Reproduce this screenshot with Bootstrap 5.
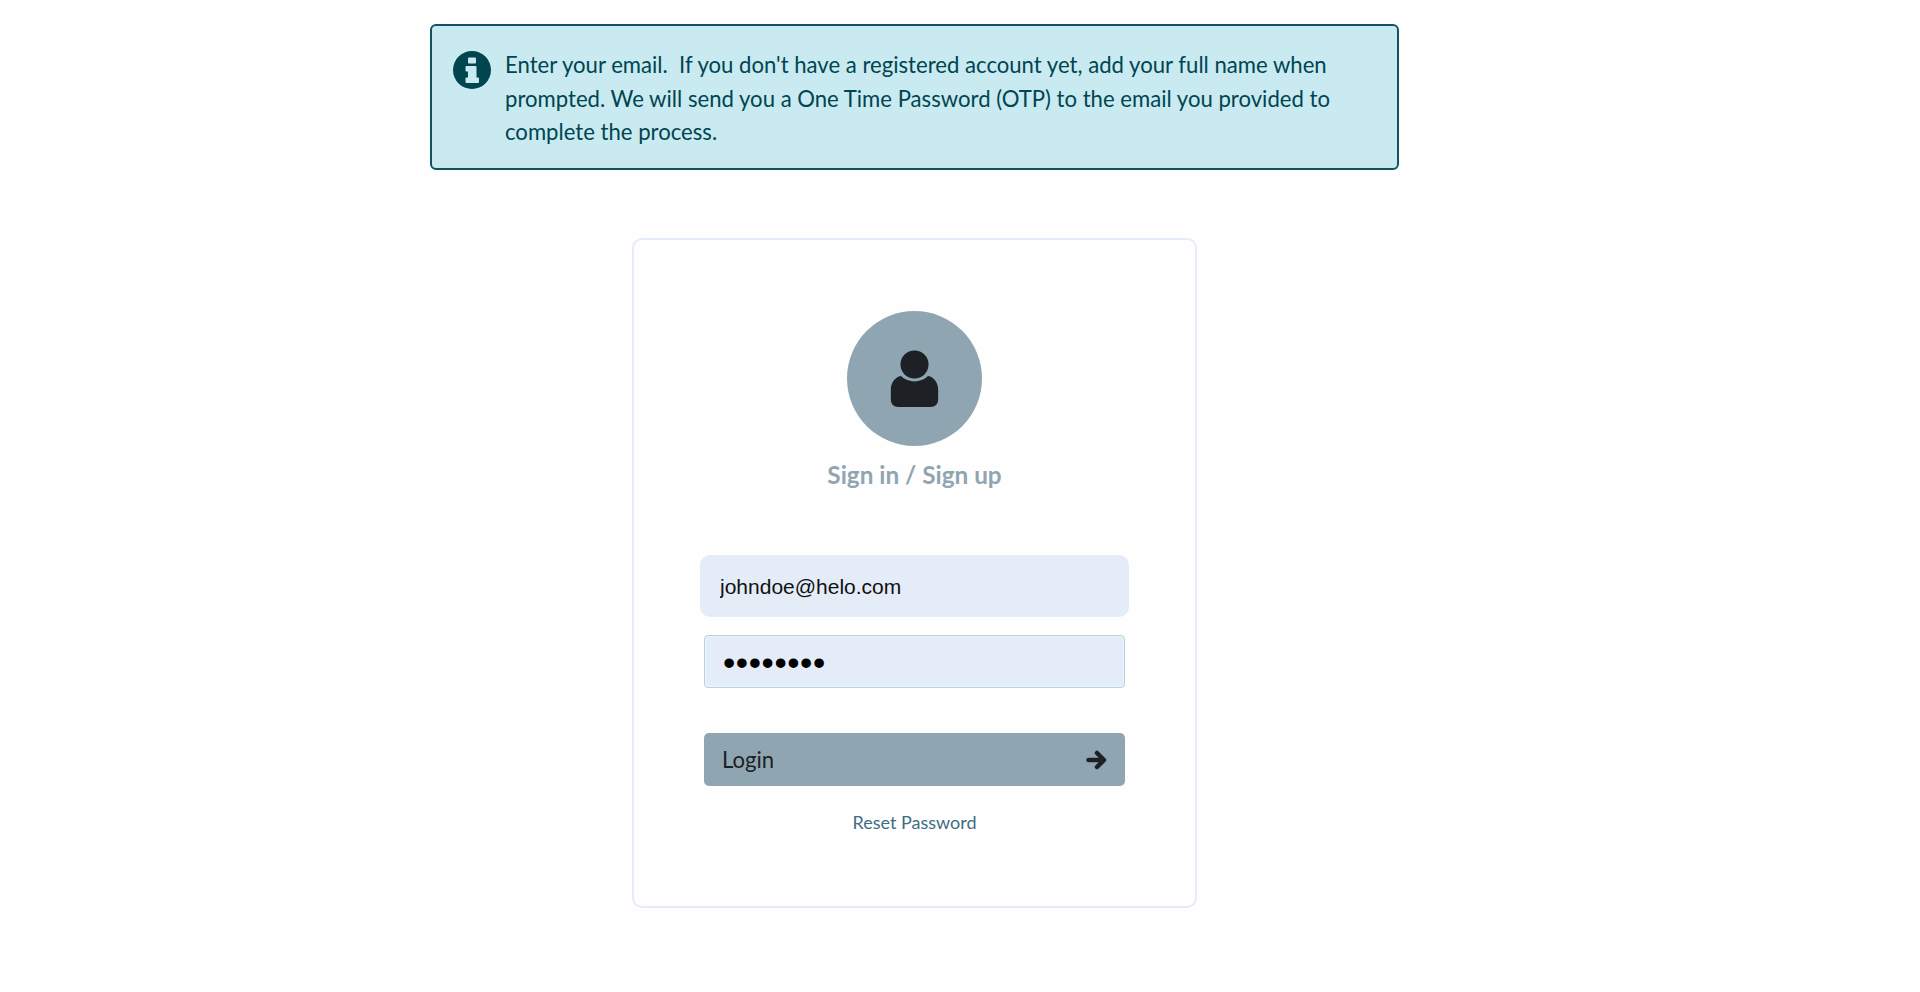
<!DOCTYPE html>
<html lang="en">
<head>
    <meta charset="UTF-8">
    <meta name="viewport" content="width=device-width, initial-scale=1.0">
    <title>Sign in / Sign up</title>
    <link href="https://cdn.jsdelivr.net/npm/bootstrap@5.3.0/dist/css/bootstrap.min.css" rel="stylesheet">
    <style>
        body {
            background-color: #fefefe;
            font-family: Lato, "Liberation Sans", sans-serif;
        }
        .page-wrap {
            width: 969px;
            margin-left: 430px;
            padding-top: 24px;
        }
        .info-box {
            height: 146px;
            padding: 22px 20px 0 21px;
            background-color: #c9eaf0;
            border: 2px solid #12535f;
            border-radius: 6px;
            color: #004550;
            font-size: 22.130px;
            line-height: 33.600px;
        }
        .info-icon {
            flex-shrink: 0;
            margin-top: 3px;
        }
        .info-box p {
            margin: 0 0 0 14px;
        }
        .login-box {
            width: 565px;
            height: 670px;
            margin: 68px auto 0;
            padding: 71px 66px 0;
            background-color: #fefefe;
            border: 2px solid #e4ecf8;
            border-radius: 10px;
        }
        .avatar {
            width: 135px;
            height: 135px;
            background-color: #8fa6b2;
        }
        .login-title {
            margin: 11px 0 0;
            color: #8fa6b2;
            font-size: 24.300px;
            font-weight: 700;
            line-height: 36px;
        }
        .email-input, .email-input:focus {
            height: 62px;
            margin-top: 62px;
            padding: 2px 20px 0;
            background-color: #e4ecf8;
            border: 0;
            border-radius: 10px;
            box-shadow: none;
            color: #111;
            font-family: "Liberation Sans", Arial, sans-serif;
            font-size: 21px;
        }
        .pass-input, .pass-input:focus {
            width: 421px;
            height: 53px;
            margin: 18px auto 0;
            padding: 2px 18px 0;
            background-color: #e4ecf8;
            border: 1px solid #b4d3dc;
            border-radius: 4px;
            box-shadow: inset 0 0 0 1px #eef5fa;
            color: #000;
            font-family: "Liberation Sans", Arial, sans-serif;
            font-size: 35px;
            letter-spacing: 0.6px;
        }
        .login-btn {
            width: 421px;
            height: 53px;
            margin: 45px auto 0;
            padding: 1px 18px 0;
            background-color: #8fa6b2;
            border: 0;
            border-radius: 5px;
            color: #1d2125;
            font-size: 22.130px;
        }
        .login-btn:hover {
            background-color: #8fa6b2;
            color: #1d2125;
        }
        .reset-link {
            margin-top: 23px;
            color: #3f6d82;
            font-size: 18px;
            line-height: 27px;
            text-decoration: none;
        }
    </style>
</head>
<body>
    <div class="page-wrap">
        <!-- Info message -->
        <div class="info-box d-flex">
            <svg class="info-icon" width="38" height="38" viewBox="0 0 38 38" aria-hidden="true">
                <path fill="#004550" fill-rule="evenodd" d="M19 0a19 19 0 1 0 0 38a19 19 0 1 0 0-38zM16 6.500h6a1 1 0 0 1 1 1v4a1 1 0 0 1-1 1h-6a1 1 0 0 1-1-1v-4a1 1 0 0 1 1-1zM13.500 15h9a1 1 0 0 1 1 1v10.500h1.500a1 1 0 0 1 1 1v3.500a1 1 0 0 1-1 1h-11.500a1 1 0 0 1-1-1v-3.500a1 1 0 0 1 1-1h1.500v-6h-1.500a1 1 0 0 1-1-1v-3.500a1 1 0 0 1 1-1z"/>
            </svg>
            <p>Enter your email.&nbsp; If you don't have a registered account yet, add your full name when prompted. We will send you a One Time Password (OTP) to the email you provided to complete the process.</p>
        </div>

        <!-- Login card -->
        <div class="login-box d-flex flex-column align-items-stretch text-center">
            <div class="avatar rounded-circle d-flex align-items-center justify-content-center mx-auto">
                <svg width="49" height="58" viewBox="0 0 50 60" aria-hidden="true">
                    <circle cx="25" cy="15" r="14.500" fill="#1d2125"/>
                    <path fill="#1d2125" d="M11 27c4 4 9 5.500 14 5.500s10-1.500 14-5.500c6 1 10.500 7 10.500 14v10c0 5-3 8-8 8h-33c-5 0-8-3-8-8v-10c0-7 4.500-13 10.500-14z"/>
                </svg>
            </div>
            <h1 class="login-title">Sign in / Sign up</h1>
            <form class="d-flex flex-column">
                <input type="email" class="form-control email-input" value="johndoe@helo.com" aria-label="Email">
                <input type="password" class="form-control pass-input" value="password" aria-label="Password">
                <button type="button" class="btn login-btn d-flex align-items-center justify-content-between">
                    <span>Login</span>
                    <svg width="21" height="20" viewBox="0 0 21 20" aria-hidden="true">
                        <path fill="none" stroke="#1d2125" stroke-width="4.500" stroke-linecap="round" stroke-linejoin="round" d="M2.500 10h15M11 3l7 7l-7 7"/>
                    </svg>
                </button>
                <a href="#" class="reset-link">Reset Password</a>
            </form>
        </div>
    </div>
    <script src="https://cdn.jsdelivr.net/npm/bootstrap@5.3.0/dist/js/bootstrap.bundle.min.js"></script>
</body>
</html>
